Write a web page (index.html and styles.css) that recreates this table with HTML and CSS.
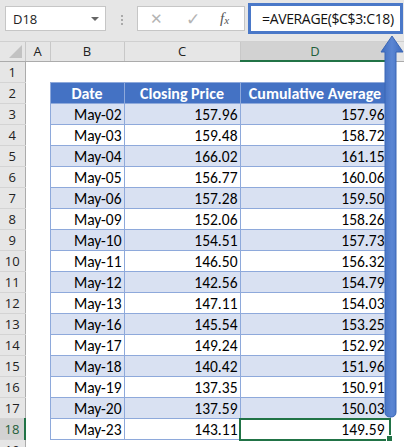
FILE: index.html
```html
<!DOCTYPE html>
<html>
<head>
<meta charset="utf-8">
<link rel="stylesheet" href="styles.css">
</head>
<body>
<div class="app">
  <div class="toolbar">
    <div class="namebox"><span class="ref">D18</span><span class="caret"></span></div>
    <div class="dots"><i></i><i></i><i></i></div>
    <div class="fbtns">
      <span class="x">✕</span>
      <span class="ok">✓</span>
      <span class="fx"><i>f</i><sub>x</sub></span>
    </div>
    <div class="formula">=AVERAGE($C$3:C18)</div>
  </div>
  <div class="sheet">
    <table class="grid">
      <colgroup>
        <col class="c-rh"><col class="c-a"><col class="c-b"><col class="c-c"><col class="c-d"><col class="c-e">
      </colgroup>
      <thead>
        <tr><th class="corner"><span class="tri"></span></th><th>A</th><th>B</th><th>C</th><th class="sel">D</th><th></th></tr>
      </thead>
      <tbody>
        <tr><th>1</th><td></td><td></td><td></td><td></td><td></td></tr>
        <tr><th>2</th><td></td><td class="h">Date</td><td class="h">Closing Price</td><td class="h">Cumulative Average</td><td></td></tr>
        <tr class="odd"><th>3</th><td></td><td class="d">May-02</td><td class="d">157.96</td><td class="d dd">157.96</td><td></td></tr>
        <tr><th>4</th><td></td><td class="d">May-03</td><td class="d">159.48</td><td class="d dd">158.72</td><td></td></tr>
        <tr class="odd"><th>5</th><td></td><td class="d">May-04</td><td class="d">166.02</td><td class="d dd">161.15</td><td></td></tr>
        <tr><th>6</th><td></td><td class="d">May-05</td><td class="d">156.77</td><td class="d dd">160.06</td><td></td></tr>
        <tr class="odd"><th>7</th><td></td><td class="d">May-06</td><td class="d">157.28</td><td class="d dd">159.50</td><td></td></tr>
        <tr><th>8</th><td></td><td class="d">May-09</td><td class="d">152.06</td><td class="d dd">158.26</td><td></td></tr>
        <tr class="odd"><th>9</th><td></td><td class="d">May-10</td><td class="d">154.51</td><td class="d dd">157.73</td><td></td></tr>
        <tr><th>10</th><td></td><td class="d">May-11</td><td class="d">146.50</td><td class="d dd">156.32</td><td></td></tr>
        <tr class="odd"><th>11</th><td></td><td class="d">May-12</td><td class="d">142.56</td><td class="d dd">154.79</td><td></td></tr>
        <tr><th>12</th><td></td><td class="d">May-13</td><td class="d">147.11</td><td class="d dd">154.03</td><td></td></tr>
        <tr class="odd"><th>13</th><td></td><td class="d">May-16</td><td class="d">145.54</td><td class="d dd">153.25</td><td></td></tr>
        <tr><th>14</th><td></td><td class="d">May-17</td><td class="d">149.24</td><td class="d dd">152.92</td><td></td></tr>
        <tr class="odd"><th>15</th><td></td><td class="d">May-18</td><td class="d">140.42</td><td class="d dd">151.96</td><td></td></tr>
        <tr><th>16</th><td></td><td class="d">May-19</td><td class="d">137.35</td><td class="d dd">150.91</td><td></td></tr>
        <tr class="odd"><th>17</th><td></td><td class="d">May-20</td><td class="d">137.59</td><td class="d dd">150.03</td><td></td></tr>
        <tr><th class="selrow">18</th><td></td><td class="d">May-23</td><td class="d">143.11</td><td class="d dd active">149.59</td><td></td></tr>
        <tr><th>19</th><td></td><td></td><td></td><td></td><td></td></tr>
      </tbody>
    </table>
    <svg class="arrow" width="24" height="386" viewBox="0 0 24 386">
      <defs>
        <linearGradient id="sh" x1="0" x2="1" y1="0" y2="0">
          <stop offset="0" stop-color="#3e6bbd"/>
          <stop offset="0.5" stop-color="#5b86d3"/>
          <stop offset="1" stop-color="#3e6bbd"/>
        </linearGradient>
      </defs>
      <path d="M12 1 L23 17 L16 17 L16 377 Q16 382 10.5 382 Q5 382 5 377 L5 17 L1 17 Z" fill="url(#sh)" stroke="#3a66b5" stroke-width="1"/>
    </svg>
  </div>
</div>
</body>
</html>
```

FILE: styles.css
```css
html, body {
  margin: 0;
  padding: 0;
  background: #ffffff;
}
body {
  width: 404px;
  height: 447px;
  overflow: hidden;
  font-family: "Carlito", "Lato", "Liberation Sans", sans-serif;
}
.app {
  display: flex;
  flex-direction: column;
  width: 404px;
  overflow: hidden;
}
.toolbar {
  height: 42px;
  background: #e6e6e6;
  display: flex;
  align-items: flex-start;
  box-sizing: border-box;
  border-bottom: 1px solid #d0d0d0;
}
.namebox {
  margin: 6px 0 0 5px;
  width: 101px;
  height: 25px;
  box-sizing: border-box;
  background: #fff;
  border: 1px solid #c6c6c6;
  display: flex;
  align-items: center;
  justify-content: space-between;
  padding: 0 6px 0 7px;
  font-family: "Open Sans", "Noto Sans", sans-serif;
  font-size: 13px;
  color: #222;
}
.caret {
  width: 0;
  height: 0;
  border-left: 4px solid transparent;
  border-right: 4px solid transparent;
  border-top: 4px solid #666;
}
.dots {
  width: 31px;
  height: 31px;
  display: flex;
  flex-direction: column;
  align-items: center;
  justify-content: center;
  gap: 2px;
  margin-top: 4px;
}
.dots i {
  width: 2px;
  height: 2px;
  background: #aaa;
}
.fbtns {
  margin-top: 6px;
  width: 108px;
  height: 25px;
  box-sizing: border-box;
  background: #fff;
  border: 1px solid #c6c6c6;
  display: flex;
  align-items: center;
  padding: 0 0 0 12px;
}
.fbtns .x {
  width: 36px;
  color: #b4b4b4;
  font-size: 15px;
  font-family: "DejaVu Sans", sans-serif;
}
.fbtns .ok {
  width: 34px;
  color: #b4b4b4;
  font-size: 17px;
  font-family: "DejaVu Sans", sans-serif;
}
.fbtns .fx {
  font-family: "Liberation Serif", serif;
  font-style: italic;
  color: #555;
  font-size: 15px;
}
.fbtns .fx sub {
  font-size: 11px;
  vertical-align: -1px;
}
.formula {
  margin: 3px 0 0 3px;
  width: 155px;
  height: 31px;
  box-sizing: border-box;
  background: #fff;
  border: 3px solid #4a78c8;
  display: flex;
  align-items: center;
  padding-left: 11px;
  font-family: "Open Sans", "Noto Sans", sans-serif;
  font-size: 14px;
  letter-spacing: -0.35px;
  color: #111;
  white-space: nowrap;
  overflow: hidden;
}
.sheet {
  position: relative;
}
.grid {
  border-collapse: collapse;
  table-layout: fixed;
  width: 404px;
  font-size: 15.5px;
}
.c-rh { width: 25px; }
.c-a { width: 25px; }
.c-b { width: 74px; }
.c-c { width: 116px; }
.c-d { width: 150px; }
.c-e { width: 14px; }
.grid thead th {
  height: 18px;
  padding: 0;
  background: #e6e6e6;
  border-right: 1px solid #c8c8c8;
  border-bottom: 1px solid #ababab;
  font-weight: normal;
  color: #222;
  font-family: "Open Sans", "Noto Sans", sans-serif;
  font-size: 13px;
}
.grid thead th.sel {
  background: #d2d2d2;
  border-bottom: 2px solid #217346;
  color: #1f5f3a;
}
.grid thead th.corner {
  position: relative;
}
.tri {
  position: absolute;
  right: 3px;
  bottom: 3px;
  width: 0;
  height: 0;
  border-left: 13px solid transparent;
  border-bottom: 13px solid #c2c2c2;
}
.grid tbody th {
  height: 20px;
  padding: 0;
  background: #e6e6e6;
  border-right: 1px solid #ababab;
  border-bottom: 1px solid #d4d4d4;
  font-weight: normal;
  color: #222;
  font-family: "Open Sans", "Noto Sans", sans-serif;
  font-size: 13px;
  text-align: center;
}
.grid tbody th.selrow {
  background: #d2d2d2;
  border-right: 2px solid #217346;
  color: #1f5f3a;
}
.grid td {
  padding: 0 2px 0 2px;
  height: 20px;
  white-space: nowrap;
  overflow: hidden;
}
.grid td.h {
  background: #4472c4;
  color: #fff;
  font-weight: bold;
  font-size: 16px;
  text-align: center;
  border: 1px solid #8ea9db;
}
.grid td.d {
  border: 1px solid #8ea9db;
  text-align: right;
  color: #000;
}
.grid td.dd {
  padding-right: 5px;
}
.grid tr.odd td.d {
  background: #d9e1f2;
}
.grid td.active {
  position: relative;
  outline: 2px solid #217346;
  outline-offset: -1px;
  overflow: visible;
}
.grid td.active::after {
  content: "";
  position: absolute;
  right: -3px;
  bottom: -3px;
  width: 5px;
  height: 5px;
  background: #217346;
  border: 1px solid #fff;
}
.arrow {
  position: absolute;
  left: 380px;
  top: -7px;
}
```
